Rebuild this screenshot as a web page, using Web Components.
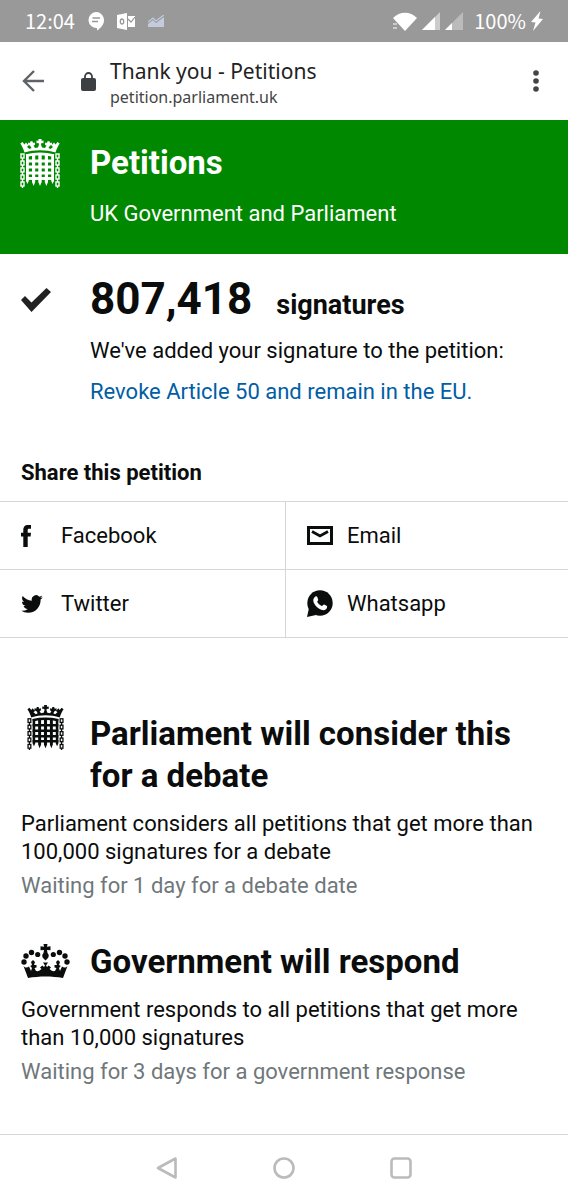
<!DOCTYPE html>
<html lang="en">
<head>
<meta charset="utf-8">
<meta name="viewport" content="width=device-width, initial-scale=1">
<title>Thank you - Petitions</title>
<style>
    body {
        margin: 0;
        background: #fff;
        color: #0b0c0c;
        font: 22px/28px Roboto, "Liberation Sans", sans-serif;
    }
</style>
</head>
<body>
<petition-app></petition-app>
<script>
const chainLinks = [15, 22, 29, 36, 43].map(y => `
    <rect x="1" y="${y}" width="3" height="4"/><path d="M2.5 ${y + 4}v3"/>
    <rect x="36" y="${y}" width="3" height="4"/><path d="M37.5 ${y + 4}v3"/>`).join('');

const ICONS = {
    portcullis: ['0 0 40 49', `
        <path d="M4.500 13.500C3.500 10 2 7 .3 4.500L2.500 3l2 2.500L6 3.500 8.500 6.500 7 8l2.500 2 2-1L10 6.500 8 6V3.500l2 .5.5-1.800h2L13 4l2-.5V6l-1.500.5 1.500 2.500 3-.5L19 5.500 18.500 4l-2 .3V1.500l2 .3V0h3v1.800l2-.3v2.800l-2-.3L21 5.500l1 3 3 .5 1.500-2.500L25 6V3.500l2 .5.5-1.800h2L30 4l2-.5V6l-2 .5L28.500 9l2 1L33 8l-1.500-1.500L34 3.500l1.500 2 2-2.500 2.200 1.500C38 7 36.500 10 35.500 13.500 25.500 10.500 14.500 10.500 4.500 13.500Z"/>
        <path d="M6 16.500c9-2 19-2 28 0M6 22h28M6 28h28M6 34h28M6 39.500h28" fill="none" stroke="currentColor" stroke-width="2.800"/>
        <path d="M6 15.500h2.800V42l-1.400 3L6 42ZM12 14.500h3.200V43l-1.600 4-1.600-4ZM18.300 14.500h3.400V43L20 47l-1.700-4ZM24.800 14.500H28V43l-1.600 4-1.600-4ZM31.200 15.500H34V42l-1.400 3-1.400-3Z"/>
        <g fill="none" stroke="currentColor" stroke-width="1.400">${chainLinks}</g>`],
    crown: ['0 0 49 34', `
        <circle cx="3" cy="18" r="2.700"/><circle cx="5" cy="12" r="2.700"/><circle cx="10.500" cy="8.500" r="2.700"/><circle cx="16.700" cy="10.500" r="2.600"/>
        <circle cx="46" cy="18" r="2.700"/><circle cx="44" cy="12" r="2.700"/><circle cx="38.500" cy="8.500" r="2.700"/><circle cx="32.300" cy="10.500" r="2.600"/>
        <path d="M22.500 0h4L26 2.800l3.500-.5v4L26 6l.5 3c1.700 1.200 1.700 4 0 5.500l-2 2-2-2c-1.700-1.500-1.700-4.300 0-5.500l.5-3-3.500.3v-4l3.500.5Z"/>
        <path d="M7 34 2.500 22c2 2 3.500 1.800 5.500.5l2 4.500 1-3-1.800-2 1.800-1-1-3 2-2 2 2-1 3 2.500 0v2.500l-2 .5 1.500 3c2.500.5 4-.5 5.500-2l-1.500-1.500 2.300-2 1.700 1.500 1-1.500-2-3h5l-2 3 1 1.500 1.700-1.500 2.300 2L28.500 25c1.500 1.500 3 2.500 5.500 2l1.500-3-2-.5V21l2.500 0-1-3 2-2 2 2-1 3 1.800 1-1.800 2 1 3 2-4.500c2 1.300 3.500 1.500 5.500-.5L42 34c-11-2-24-2-35 0Z"/>`],
    check: ['0 0 30 24', '<path d="m0 12 4-4 6.500 6.500L25.500 0 30 4 10.500 24Z" fill="#222"/>'],
    facebook: ['0 0 10 22', '<path d="M2.300 22V11.500H0V7.700h2.300V5.300C2.300 1.900 3.700 0 7.300 0H10v3.800H8.200c-1.400 0-1.500.5-1.500 1.500v2.400H10l-.4 3.800H6.700V22Z"/>'],
    twitter: ['0 2 24 20', '<path d="M23.953 4.570a10 10 0 0 1-2.825.775 4.958 4.958 0 0 0 2.163-2.723 10 10 0 0 1-3.127 1.184 4.920 4.920 0 0 0-8.384 4.482C7.690 8.095 4.067 6.130 1.640 3.162a4.822 4.822 0 0 0-.666 2.475c0 1.710.870 3.213 2.188 4.096a4.904 4.904 0 0 1-2.228-.616v.06a4.923 4.923 0 0 0 3.946 4.827 4.996 4.996 0 0 1-2.212.085 4.936 4.936 0 0 0 4.604 3.417A9.867 9.867 0 0 1 0 19.540a13.995 13.995 0 0 0 7.557 2.209c9.053 0 13.998-7.496 13.998-13.985 0-.21 0-.42-.015-.63A9.935 9.935 0 0 0 24 4.590Z"/>'],
    email: ['0 0 26 19', '<path d="M1.500 1.500h23v16h-23Z" fill="none" stroke="currentColor" stroke-width="3"/><path d="m5 5.500 8 4.500 8-4.500" fill="none" stroke="currentColor" stroke-width="2.800"/>'],
    whatsapp: ['0 0 26 27', '<circle cx="13" cy="13" r="12.700"/><path d="m0 27 2-9 7 7Z"/><path d="M8.500 6.500c1.200-.5 1.700.2 2 1.200l.7 2c.2.800-.9 1.500-1 2 1 2 2.500 3.500 4.700 4.400.8-.2 1.500-1.800 2.300-1.500l2.800 1.500c.4.500 0 2.400-1 3.200-2 1.500-4.500.8-6.800-.5C9.500 17 6.500 13.700 6.300 10.500c-.1-1.700.8-3.200 2.200-4Z" fill="#fff"/>'],
    chat: ['0 0 16 19', '<path d="M8 0a8 8 0 0 1 8 8.200c0 4.500-3.500 8-7 10.300V16A8 8 0 1 1 8 0Z"/><path d="M4.500 6h7.500M4 9.500h6" stroke="#999" stroke-width="1.400"/>'],
    outlook: ['0 0 18 17', '<path d="m0 2 10-2v17L0 15Z"/><path d="M11 3h7v11h-7Z"/><path d="m11 6 3 3 4-5" fill="none" stroke="#999" stroke-width="1.200"/><ellipse cx="5" cy="8.500" rx="1.700" ry="2.500" fill="none" stroke="#999" stroke-width="1.300"/>'],
    chart: ['0 0 16 12', '<path d="M0 12V9l5-4 3 3 8-6v10Z" fill="#c3cbdc"/><path d="m0 7 5-4 3 3 8-6" fill="none" stroke="#c3cbdc" stroke-width="1.300"/>'],
    wifi: ['0 0 25 19', '<path d="M1 6C8-1 18-1 25 6L13 19Z"/><path d="M1 12h4M1 16h4" stroke="#ccc" stroke-width="2"/>'],
    signal: ['0 0 18 18', '<path d="M18 0v18H0Z" fill="#ccc"/><path d="M13 5v13H0Z"/>'],
    signalLow: ['0 0 18 18', '<path d="M18 0v18H0Z" fill="#bbb"/><path d="M7 11v7H0Z"/>'],
    bolt: ['0 0 12 20', '<path d="M9.500 0 0 11l4.500.5L2 20 12 8 7.500 7.500Z"/>'],
    back: ['0 0 22 22', '<path d="M22 11H2M12 1 2 11l10 10" fill="none" stroke="#5f6368" stroke-width="2.400"/>'],
    lock: ['0 0 15 20', '<path d="M4 9V5.500a3.500 3.500 0 0 1 7 0V9" fill="none" stroke="#3c4043" stroke-width="1.800"/><rect y="7" width="15" height="13" rx="2" fill="#3c4043"/>'],
    more: ['0 0 6 22', '<g fill="#444"><circle cx="3" cy="3" r="2.800"/><circle cx="3" cy="11" r="2.800"/><circle cx="3" cy="19" r="2.800"/></g>'],
    navBack: ['0 0 22 22', '<path d="M19.500 1.500v19L2 11Z" fill="none" stroke="#bbb" stroke-width="2.600" stroke-linejoin="round"/>'],
    navHome: ['0 0 22 22', '<circle cx="11" cy="11" r="9.500" fill="none" stroke="#bbb" stroke-width="2.600"/>'],
    navRecent: ['0 0 22 22', '<rect x="1.500" y="1.500" width="19" height="19" rx="3" fill="none" stroke="#bbb" stroke-width="2.600"/>']
};

class UiIcon extends HTMLElement {
    connectedCallback() {
        const [viewBox, shapes] = ICONS[this.getAttribute('name')];
        const [, , width, height] = viewBox.split(' ');
        const w = this.getAttribute('width') || width;
        this.attachShadow({ mode: 'open' }).innerHTML = `
            <style>
                :host { display: block; flex: none; }
                svg { display: block; fill: currentColor; }
            </style>
            <svg width="${w}" height="${Math.round(w * height / width)}" viewBox="${viewBox}" aria-hidden="true">${shapes}</svg>
        `;
    }
}

class StatusBar extends HTMLElement {
    connectedCallback() {
        this.attachShadow({ mode: 'open' }).innerHTML = `
            <style>
                :host {
                    display: flex;
                    align-items: center;
                    justify-content: space-between;
                    height: 42px;
                    padding: 0 25px;
                    background: #999;
                    color: #fff;
                    font: 20px/28px "Noto Sans CJK SC", "Noto Sans", sans-serif;
                }
                div { display: flex; align-items: center; }
                .left { gap: 13px; }
                .right { gap: 5px; }
                .level { margin-left: 6px; }
            </style>
            <div class="left">
                <span>12:04</span>
                <ui-icon name="chat"></ui-icon>
                <ui-icon name="outlook"></ui-icon>
                <ui-icon name="chart"></ui-icon>
            </div>
            <div class="right">
                <ui-icon name="wifi"></ui-icon>
                <ui-icon name="signal"></ui-icon>
                <ui-icon name="signalLow"></ui-icon>
                <span class="level">100%</span>
                <ui-icon name="bolt"></ui-icon>
            </div>
        `;
    }
}

class BrowserBar extends HTMLElement {
    connectedCallback() {
        this.attachShadow({ mode: 'open' }).innerHTML = `
            <style>
                :host {
                    display: flex;
                    align-items: center;
                    height: 78px;
                    padding: 0 29px 0 22px;
                    color: #222;
                    font-family: "Noto Sans", sans-serif;
                }
                button { border: 0; padding: 0; background: none; }
                .lock { margin: 0 14px 0 37px; }
                .page { flex: 1; padding-top: 3px; }
                .title { font-size: 21px; line-height: 28px; }
                .url { font-size: 16px; line-height: 24px; color: #444; }
            </style>
            <button aria-label="Back"><ui-icon name="back"></ui-icon></button>
            <ui-icon class="lock" name="lock"></ui-icon>
            <div class="page">
                <div class="title"><slot name="title"></slot></div>
                <div class="url"><slot name="url"></slot></div>
            </div>
            <button aria-label="Menu"><ui-icon name="more"></ui-icon></button>
        `;
    }
}

class SiteHeader extends HTMLElement {
    connectedCallback() {
        this.attachShadow({ mode: 'open' }).innerHTML = `
            <style>
                :host {
                    display: flex;
                    gap: 30px;
                    padding: 19px 20px 26px;
                    background: #008800;
                    color: #fff;
                }
                h1 { margin: 3px 0 16px; font-size: 33px; line-height: 42px; }
                p { margin: 0; }
            </style>
            <ui-icon name="portcullis"></ui-icon>
            <div>
                <h1>Petitions</h1>
                <p>UK Government and Parliament</p>
            </div>
        `;
    }
}

class SignatureCount extends HTMLElement {
    connectedCallback() {
        this.attachShadow({ mode: 'open' }).innerHTML = `
            <style>
                :host { display: flex; gap: 39px; padding: 15px 21px 0; }
                ui-icon { margin-top: 19px; }
                h2 {
                    display: flex;
                    align-items: baseline;
                    gap: 24px;
                    margin: 0;
                    font-size: 27px;
                    line-height: 60px;
                }
                h2 span { font-size: 44px; }
                p { margin: 2px 0 13px; }
                a { color: #005ea5; text-decoration: none; }
            </style>
            <ui-icon name="check"></ui-icon>
            <div>
                <h2><span>807,418</span> signatures</h2>
                <p>We've added your signature to the petition:</p>
                <a href="#"><slot></slot></a>
            </div>
        `;
    }
}

class ShareLinks extends HTMLElement {
    connectedCallback() {
        this.attachShadow({ mode: 'open' }).innerHTML = `
            <style>
                :host { display: block; padding-top: 53px; }
                h2 { margin: 0 21px 14px; font-size: 22px; line-height: 28px; }
                ul {
                    display: grid;
                    grid-template-columns: calc(50% + 1px) 1fr;
                    gap: 1px;
                    margin: 0;
                    padding: 1px 0;
                    background: #d4d6d8;
                    list-style: none;
                }
                a {
                    display: grid;
                    grid-template-columns: 40px 1fr;
                    align-items: center;
                    height: 67px;
                    padding: 0 21px;
                    background: #fff;
                    color: #0b0c0c;
                    text-decoration: none;
                }
            </style>
            <h2>Share this petition</h2>
            <ul>
                <li><a href="#"><ui-icon name="facebook"></ui-icon>Facebook</a></li>
                <li><a href="#"><ui-icon name="email"></ui-icon>Email</a></li>
                <li><a href="#"><ui-icon name="twitter" width="22"></ui-icon>Twitter</a></li>
                <li><a href="#"><ui-icon name="whatsapp"></ui-icon>Whatsapp</a></li>
            </ul>
        `;
    }
}

class PetitionStage extends HTMLElement {
    connectedCallback() {
        this.attachShadow({ mode: 'open' }).innerHTML = `
            <style>
                :host { display: block; padding: 0 21px 41px; }
                header { display: flex; gap: 20px; }
                .icon {
                    display: flex;
                    align-items: flex-end;
                    justify-content: center;
                    flex: none;
                    width: 49px;
                    height: 37px;
                }
                h2 { margin: 0 0 13px; font-size: 33px; line-height: 42px; }
                p { margin: 0 0 6px; }
                .wait { margin: 0; color: #6f777b; }
            </style>
            <header>
                <div class="icon"><ui-icon name="${this.getAttribute('icon')}" width="${this.getAttribute('icon-width')}"></ui-icon></div>
                <h2><slot name="heading"></slot></h2>
            </header>
            <p><slot></slot></p>
            <p class="wait"><slot name="wait"></slot></p>
        `;
    }
}

class SystemNav extends HTMLElement {
    connectedCallback() {
        this.attachShadow({ mode: 'open' }).innerHTML = `
            <style>
                :host {
                    display: flex;
                    align-items: center;
                    justify-content: center;
                    gap: 95px;
                    height: 65px;
                    border-top: 1px solid #d4d6d8;
                }
                button { border: 0; padding: 0; background: none; }
            </style>
            <button aria-label="Back"><ui-icon name="navBack"></ui-icon></button>
            <button aria-label="Home"><ui-icon name="navHome"></ui-icon></button>
            <button aria-label="Recent apps"><ui-icon name="navRecent"></ui-icon></button>
        `;
    }
}

class PetitionApp extends HTMLElement {
    connectedCallback() {
        this.attachShadow({ mode: 'open' }).innerHTML = `
            <style>
                :host { display: flex; flex-direction: column; min-height: 100vh; }
                main { flex: 1; }
                .stages { padding-top: 75px; }
            </style>
            <status-bar></status-bar>
            <browser-bar>
                <span slot="title">Thank you - Petitions</span>
                <span slot="url">petition.parliament.uk</span>
            </browser-bar>
            <site-header></site-header>
            <main>
                <signature-count>Revoke Article 50 and remain in the EU.</signature-count>
                <share-links></share-links>
                <div class="stages">
                    <petition-stage icon="portcullis" icon-width="37">
                        <span slot="heading">Parliament will consider this for a debate</span>
                        Parliament considers all petitions that get more than 100,000 signatures for a debate
                        <span slot="wait">Waiting for 1 day for a debate date</span>
                    </petition-stage>
                    <petition-stage icon="crown" icon-width="49">
                        <span slot="heading">Government will respond</span>
                        Government responds to all petitions that get more than 10,000 signatures
                        <span slot="wait">Waiting for 3 days for a government response</span>
                    </petition-stage>
                </div>
            </main>
            <system-nav></system-nav>
        `;
    }
}

customElements.define('ui-icon', UiIcon);
customElements.define('status-bar', StatusBar);
customElements.define('browser-bar', BrowserBar);
customElements.define('site-header', SiteHeader);
customElements.define('signature-count', SignatureCount);
customElements.define('share-links', ShareLinks);
customElements.define('petition-stage', PetitionStage);
customElements.define('system-nav', SystemNav);
customElements.define('petition-app', PetitionApp);
</script>
</body>
</html>
